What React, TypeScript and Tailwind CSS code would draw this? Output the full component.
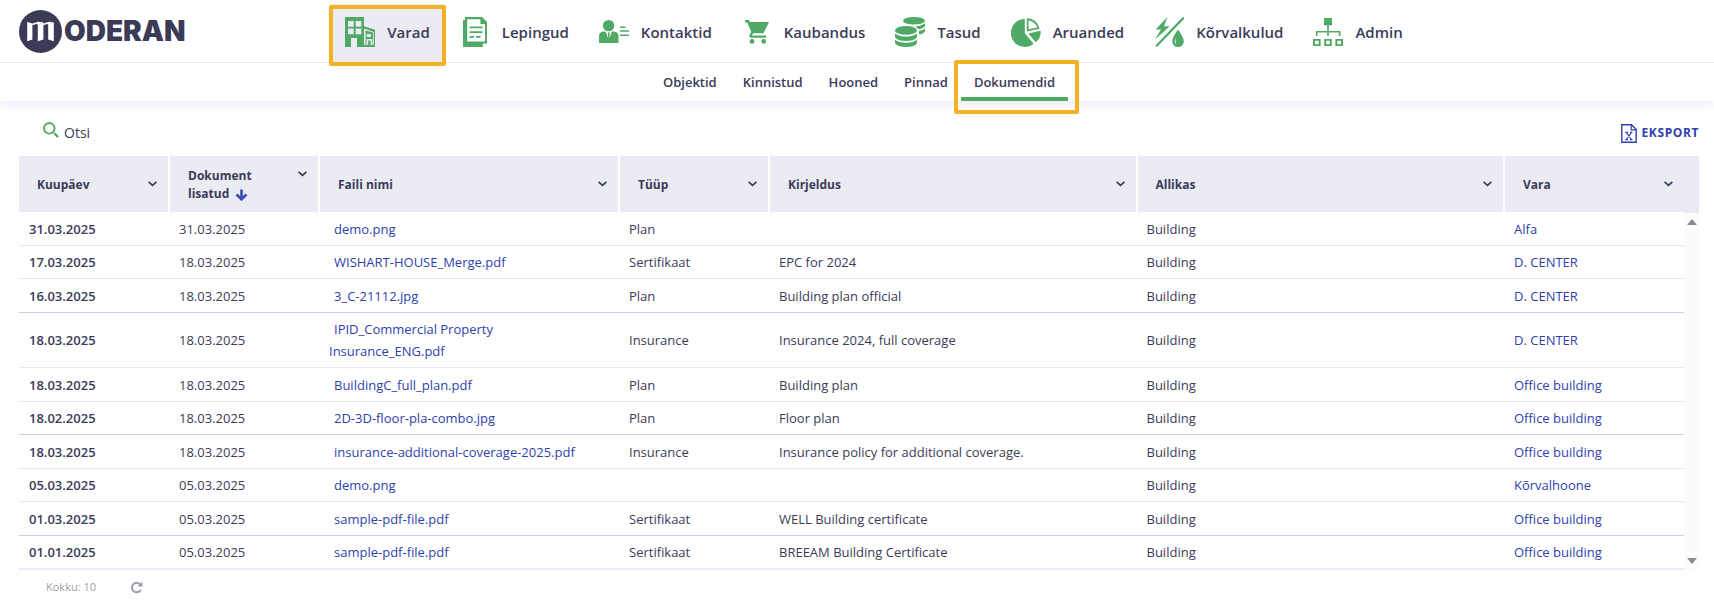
import type { ReactNode } from "react";

const GREEN = "#50aa66";

function Icon({ children }: { children: ReactNode }) {
  return (
    <svg width="30" height="30" viewBox="0 0 30 30" className="shrink-0" fill={GREEN} aria-hidden="true">
      {children}
    </svg>
  );
}

const BuildingsIcon = (
  <Icon>
    <path
      fillRule="evenodd"
      d="M0 0H19V9.2L30 12.8V30H12V21H6V30H0ZM3 4V9.7H8.7V4ZM10.7 4V9.7H16.3V4ZM3 11.4V17.3H8.7V11.4ZM10.7 11.4V17.3H16.3V11.4ZM19 11V28H20.6V13.4L28.2 15.6V28H29V15L19 11.6ZM21.6 17V20H26V17ZM21.6 22V28H23.2V23.6H25.6V28H27.4V22Z"
    />
  </Icon>
);

const ContractsIcon = (
  <Icon>
    <path
      fillRule="evenodd"
      d="M5 0H22L27 5V26.5H22.8V30H3V3H5ZM7.2 2.2V24.6H25V7H20.4V2.2Z"
    />
    <path d="M9.5 9.5H22.5V11.3H9.5ZM9.5 14.2H22.5V16H9.5ZM9.5 19H14V20.8H9.5ZM16 19H20.5V20.8H16Z" />
  </Icon>
);

const ContactsIcon = (
  <Icon>
    <circle cx="9.6" cy="8.6" r="5.7" />
    <path d="M0 26V19Q0 15.2 4.5 14.6L6.6 14.4L9.2 21.5L8.7 15.5H10.8L10.3 21.5L12.9 14.4L15 14.6Q19.5 15.2 19.5 19V26Z" />
    <path d="M21 9.5H26.5V11H21ZM21 13.3H30V14.8H21ZM21 17.5H30V19H21Z" />
  </Icon>
);

const TradeIcon = (
  <Icon>
    <path d="M3 3H6.8L8 5H27L22 15.2Q21.5 16.2 20.3 16.2H11.2L9.9 18.6H24V20.8H9Q6.7 20.3 7.6 18L9.2 14.8L5.3 5.6H3Z" />
    <circle cx="10" cy="24.4" r="2.4" />
    <circle cx="21.7" cy="24.4" r="2.4" />
  </Icon>
);

const FeesIcon = (
  <Icon>
    <ellipse cx="19" cy="3.8" rx="11" ry="3.8" />
    <path d="M20 9.3Q27.5 9 30 6V8.8Q29 11.6 23.4 12.2Q22.3 10.4 20 9.3ZM24 14Q28 13.4 30 11.5V14.6Q28 17.2 24 17.6Z" />
    <ellipse cx="11" cy="13.4" rx="11" ry="4.3" />
    <path d="M0 16.5Q3.5 19.6 11 19.6T22 16.5V20Q20 23.9 11 23.9T0 20ZM0 22.7Q3.5 25.7 11 25.7T22 22.7V26Q20 30 11 30T0 26Z" />
  </Icon>
);

const ReportsIcon = (
  <Icon>
    <path d="M13.8 2V16.2L22.6 26.8Q18.8 30 13.8 30A14 14 0 0 1 13.8 2Z" />
    <path d="M17.3 16.4L29.5 13.8Q30.6 20 24.8 25.2Z" />
    <path fillRule="evenodd" d="M15.8 1Q26.2 1.8 28.7 11.8L15.8 14.5ZM17.5 3.2V12.3L26.3 10.4Q23.8 4.4 17.5 3.2Z" />
  </Icon>
);

const UtilitiesIcon = (
  <Icon>
    <path d="M29.8 0.5L2.2 29.2" stroke={GREEN} strokeWidth="2.2" fill="none" />
    <path d="M13.5 0L1.6 12.4H7L1 22.4L15.8 9.2H10Z" />
    <path fillRule="evenodd" d="M24 12.6Q29.8 20.6 29.8 24.3A5.8 5.8 0 0 1 18.2 24.3Q18.2 20.6 24 12.6ZM21.8 20.4Q19.2 25.5 22.6 28Q20.8 24.6 21.8 20.4Z" />
  </Icon>
);

const AdminIcon = (
  <Icon>
    <path d="M11 1H19V8.2H11ZM14.2 8H15.8V14H27.5V19H25.8V15.6H15.8V19H14.2V15.6H4.5V19H3V14H14.2Z" />
    <path
      fillRule="evenodd"
      d="M0 22H7.6V29H0ZM1.9 23.8V27.2H5.7V23.8ZM11.2 22H18.8V29H11.2ZM13.1 23.8V27.2H16.9V23.8ZM22.4 22H30V29H22.4ZM24.3 23.8V27.2H28.1V23.8Z"
    />
  </Icon>
);

const mainNav = [
  { label: "Varad", icon: BuildingsIcon },
  { label: "Lepingud", icon: ContractsIcon },
  { label: "Kontaktid", icon: ContactsIcon },
  { label: "Kaubandus", icon: TradeIcon },
  { label: "Tasud", icon: FeesIcon },
  { label: "Aruanded", icon: ReportsIcon },
  { label: "Kõrvalkulud", icon: UtilitiesIcon },
  { label: "Admin", icon: AdminIcon },
];

const subNav = ["Objektid", "Kinnistud", "Hooned", "Pinnad", "Dokumendid"];

const columns = [
  { label: "Kuupäev", width: "w-[150px]" },
  { label: "Dokument lisatud", width: "w-[150px]", sorted: true },
  { label: "Faili nimi", width: "w-[300px]" },
  { label: "Tüüp", width: "w-[150px]" },
  { label: "Kirjeldus", width: "" },
  { label: "Allikas", width: "" },
  { label: "Vara", width: "w-[180px]" },
];

type Doc = {
  date: string;
  added: string;
  file: string;
  type: string;
  description: string;
  asset: string;
  strong?: boolean;
};

const docs: Doc[] = [
  { date: "31.03.2025", added: "31.03.2025", file: "demo.png", type: "Plan", description: "", asset: "Alfa" },
  { date: "17.03.2025", added: "18.03.2025", file: "WISHART-HOUSE_Merge.pdf", type: "Sertifikaat", description: "EPC for 2024", asset: "D. CENTER" },
  { date: "16.03.2025", added: "18.03.2025", file: "3_C-21112.jpg", type: "Plan", description: "Building plan official", asset: "D. CENTER", strong: true },
  { date: "18.03.2025", added: "18.03.2025", file: "IPID_Commercial Property Insurance_ENG.pdf", type: "Insurance", description: "Insurance 2024, full coverage", asset: "D. CENTER" },
  { date: "18.03.2025", added: "18.03.2025", file: "BuildingC_full_plan.pdf", type: "Plan", description: "Building plan", asset: "Office building" },
  { date: "18.02.2025", added: "18.03.2025", file: "2D-3D-floor-pla-combo.jpg", type: "Plan", description: "Floor plan", asset: "Office building", strong: true },
  { date: "18.03.2025", added: "18.03.2025", file: "insurance-additional-coverage-2025.pdf", type: "Insurance", description: "Insurance policy for additional coverage.", asset: "Office building" },
  { date: "05.03.2025", added: "05.03.2025", file: "demo.png", type: "", description: "", asset: "Kõrvalhoone" },
  { date: "01.03.2025", added: "05.03.2025", file: "sample-pdf-file.pdf", type: "Sertifikaat", description: "WELL Building certificate", asset: "Office building", strong: true },
  { date: "01.01.2025", added: "05.03.2025", file: "sample-pdf-file.pdf", type: "Sertifikaat", description: "BREEAM Building Certificate", asset: "Office building" },
];

function Logo() {
  return (
    <a href="#" className="flex shrink-0 items-center gap-[2px]" aria-label="Moderan">
      <svg width="43" height="43" viewBox="0 0 43 43" aria-hidden="true">
        <circle cx="21.5" cy="21.5" r="21.5" fill="#3b3b58" />
        <g fill="#fff">
          <path d="M8.2 12L13.4 13.4V29.6L8.2 31.2Z" />
          <path d="M18.8 14.4L24.4 12.6V29.6L18.8 31.2Z" />
          <path d="M29.2 14.4L34.8 12.6V31.2L29.2 29.6Z" />
          <path d="M13.4 13.4L19.4 11.8L24.4 12.6L18.8 15L17.6 13.8L13.4 15.6Z" />
          <path d="M24.4 13.4L30 11.8L34.8 12.6L29.2 15L28.2 13.8L24.4 15.6Z" />
        </g>
      </svg>
      <span className="font-[Inter] text-[28px] leading-[43px] font-black">ODERAN</span>
    </a>
  );
}

function ColumnHeader({ label, sorted }: { label: string; sorted?: boolean }) {
  return (
    <div className="flex items-center justify-between">
      <span className="max-w-[90px] leading-[18px]">
        {label}
        {sorted && (
          <svg width="13" height="12" viewBox="0 0 13 12" className="ml-[6px] inline" aria-hidden="true">
            <path d="M6.5 0.5V10M1.5 5.5L6.5 10.3L11.5 5.5" fill="none" stroke="#3a4cb8" strokeWidth="2.6" />
          </svg>
        )}
      </span>
      <button type="button" aria-label={`${label} menüü`} className={sorted ? "self-start pt-1" : "pb-[2px]"}>
        <svg width="9" height="6" viewBox="0 0 9 6" className="block" aria-hidden="true">
          <path d="M0.6 0.8L4.5 4.4L8.4 0.8" fill="none" stroke="#3b3b58" strokeWidth="1.7" />
        </svg>
      </button>
    </div>
  );
}

export default function App() {
  return (
    <div className="min-h-screen bg-white font-['Open_Sans','Noto_Sans',sans-serif] text-[13px] text-[#3b3b58]">
      <header className="shadow-[0_4px_10px_#ececf8]">
        <div className="flex items-start border-b border-[#e9e9f3] pl-[19px]">
          <div className="mt-[10px] w-[169px] shrink-0">
            <Logo />
          </div>
          <nav aria-label="Peamenüü" className="mt-1 flex flex-1 justify-center pr-[154px]">
            {mainNav.map((item, i) => (
              <a
                key={item.label}
                href="#"
                className={`relative flex h-[58px] items-center gap-3 px-[15px] pb-[2px] text-[15px] font-semibold ${i === 0 ? "bg-[#ebebf4]" : ""}`}
              >
                {item.icon}
                {item.label}
                {i === 0 && (
                  <span className="pointer-events-none absolute -inset-x-px top-[1px] -bottom-1 rounded-[2px] border-4 border-[#f4b123]" />
                )}
              </a>
            ))}
          </nav>
        </div>
        <nav aria-label="Alammenüü" className="flex justify-center pl-1">
          {subNav.map((label) => {
            const active = label === "Dokumendid";
            return (
              <a
                key={label}
                href="#"
                className={`relative flex h-[38px] items-center border-b-4 px-[13px] pt-[6px] font-semibold ${active ? "border-[#50aa66]" : "border-transparent"}`}
              >
                {label}
                {active && (
                  <span className="pointer-events-none absolute -top-[3px] -right-[11px] -bottom-[17px] -left-[7px] rounded-[2px] border-4 border-[#f4b123]" />
                )}
              </a>
            );
          })}
        </nav>
      </header>

      <main className="pr-[15px] pl-[19px]">
        <div className="flex h-[55px] items-center justify-between pt-[7px] pl-6">
          <button type="button" className="flex items-center gap-[5px] text-[14px]">
            <svg width="16" height="16" viewBox="0 0 16 16" className="mb-1" fill="none" stroke={GREEN} aria-hidden="true">
              <circle cx="6.3" cy="6.3" r="5.3" strokeWidth="1.9" />
              <path d="M11.2 11.2L15 15" strokeWidth="2.4" />
            </svg>
            Otsi
          </button>
          <button type="button" className="flex items-center gap-[5px] pt-[2px] text-[12px] font-bold tracking-wider text-[#2f3fae]">
            <svg width="16" height="19" viewBox="0 0 16 19" fill="none" stroke="#2f3fae" aria-hidden="true">
              <path d="M0.8 0.8H10.5L15.2 5.5V18.2H0.8Z" strokeWidth="1.4" />
              <path d="M10.2 1V5.8H15" strokeWidth="1.2" />
              <path d="M5.4 8.5L10.4 15.5M10.4 8.5L5.4 15.5M4.3 8.4H7M9 8.4H11.4M4.3 15.6H7M9 15.6H11.4" strokeWidth="1.2" />
            </svg>
            EKSPORT
          </button>
        </div>

        <div className="flex">
          <div className="min-w-0 flex-1">
            <table className="w-full table-fixed border-separate border-spacing-0 text-left">
              <thead>
                <tr>
                  {columns.map((c) => (
                    <th
                      key={c.label}
                      scope="col"
                      className={`h-14 border-x border-white bg-[#ebebf4] bg-clip-padding pt-[2px] pr-[11px] pl-[18px] text-[12px] font-bold first:border-l-0 last:border-r-0 ${c.width}`}
                    >
                      <ColumnHeader label={c.label} sorted={c.sorted} />
                    </th>
                  ))}
                </tr>
              </thead>
              <tbody className="[&>tr:last-child>td]:border-b-2 [&>tr:last-child>td]:border-[#e9ebf6]">
                {docs.map((d, i) => (
                  <tr
                    key={i}
                    className={`odd:h-[34px] [&>td]:border-b [&>td]:px-[10px] [&>td]:py-[5px] [&>td]:leading-[22px] ${d.strong ? "[&>td]:border-[#c6cfe9]" : "[&>td]:border-[#e6e6f4]"}`}
                  >
                    <td className="font-semibold">{d.date}</td>
                    <td>{d.added}</td>
                    <td className="indent-[5px] text-[#2f3fae]">
                      <a href="#">{d.file}</a>
                    </td>
                    <td>{d.type}</td>
                    <td>{d.description}</td>
                    <td>Building</td>
                    <td className="text-[#2f3fae]">
                      <a href="#">{d.asset}</a>
                    </td>
                  </tr>
                ))}
              </tbody>
            </table>
          </div>
          <div className="flex w-[15px] shrink-0 flex-col" aria-hidden="true">
            <div className="h-[57px] bg-[#ebebf4]" />
            <div className="flex flex-1 flex-col items-center justify-between bg-[#fcfcfc] py-[6px]">
              <svg width="10" height="6" viewBox="0 0 10 6">
                <path d="M0 6L5 0L10 6Z" fill="#8b8b8b" />
              </svg>
              <svg width="10" height="6" viewBox="0 0 10 6">
                <path d="M0 0L5 6L10 0Z" fill="#8b8b8b" />
              </svg>
            </div>
          </div>
        </div>

        <footer className="flex items-center gap-[34px] pt-2 pl-[27px] text-[11px] leading-[18px] text-[#a0a0a4]">
          <span>Kokku: 10</span>
          <button type="button" aria-label="Värskenda">
            <svg width="13" height="13" viewBox="0 0 13 13" className="block" aria-hidden="true">
              <path d="M10.9 8.6A4.7 4.7 0 1 1 10 3.2" fill="none" stroke="#a09fae" strokeWidth="2" />
              <path d="M12.4 0.6V5.6H7.4Z" fill="#a09fae" />
            </svg>
          </button>
        </footer>
      </main>
    </div>
  );
}
